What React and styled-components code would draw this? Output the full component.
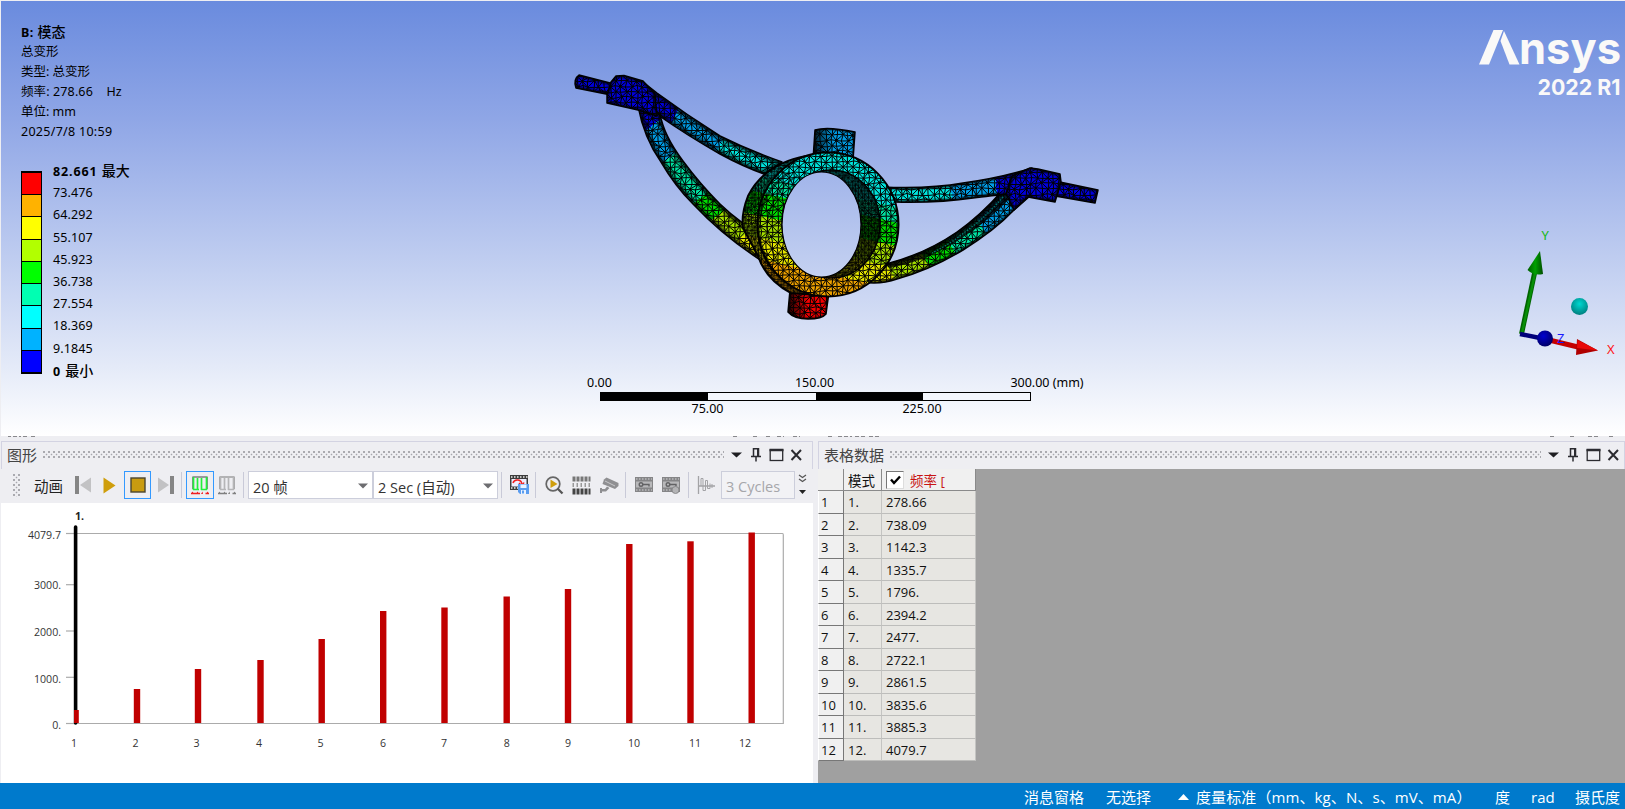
import React, { useId } from "react";
import styled, { createGlobalStyle } from "styled-components";

const UI = `"Open Sans", "Noto Sans", "Noto Sans CJK SC", sans-serif`;
const VIEW = `"Noto Sans", "Noto Sans CJK SC", sans-serif`;

const Global = createGlobalStyle`
  * { box-sizing: border-box; }
  body { margin: 0; background: #eeeef2; overflow: hidden; font-family: ${UI}; }
  svg { display: block; flex: none; }
`;

const Page = styled.div`
  width: 1625px;
  height: 809px;
  display: flex;
  flex-direction: column;
  overflow: hidden;
`;

/* ---------- graphics viewport ---------- */

const Viewport = styled.section`
  height: 435px;
  margin: 1px 0 0 1px;
  flex: none;
  display: grid;
  grid-template-columns: 559px 560px 1fr;
  background: linear-gradient(#6a8bde 0%, #8fa6e6 27%, #c3d0f1 62%, #e4eaf8 84%, #ffffff 100%);
  font-family: ${VIEW};
  color: #000;
`;

const Info = styled.div`
  padding: 21px 0 0 20px;
`;

const InfoLine = styled.div`
  height: 20px;
  line-height: 20px;
  font-size: 12.5px;
  font-weight: ${(p) => (p.$bold ? 700 : 400)};
  white-space: pre;
  letter-spacing: ${(p) => p.$track || 0}px;
  span { font-weight: 500; font-size: 14px; letter-spacing: 0; }
`;

const Legend = styled.div`
  display: flex;
  gap: 11px;
  margin-top: 18px;
`;

const Swatches = styled.div`
  width: 21px;
  height: 203px;
  margin-top: 11px;
  display: flex;
  flex-direction: column;
  border: 1px solid #000;
  border-width: 2px 1px;
`;

const Swatch = styled.div`
  flex: 1;
  background: ${(p) => p.$color};
  & + & { border-top: 1px solid #000; }
`;

const LegendLabel = styled.div`
  height: 22.2px;
  line-height: 22px;
  font-size: 12.5px;
  letter-spacing: ${(p) => (p.$bold ? 0.9 : 0.1)}px;
  font-weight: ${(p) => (p.$bold ? 700 : 400)};
  span { font-weight: 500; font-size: 14px; letter-spacing: 0; }
`;

const ModelColumn = styled.div`
  display: flex;
  flex-direction: column;
  padding-top: 59px;
`;

const RulerBox = styled.div`
  margin-top: 45px;
  width: 540px;
  font-size: 12.5px;
  line-height: 15px;
`;

const RulerLabels = styled.div`
  display: grid;
  grid-template-columns: ${(p) => p.$cols};
  height: 17px;
  white-space: pre;
  text-align: center;
`;

const RulerBar = styled.div`
  width: 431px;
  height: 9px;
  margin-left: 40px;
  border: 1px solid #000;
  display: grid;
  grid-template-columns: repeat(4, 1fr);
`;

const RulerPart = styled.div`
  background: ${(p) => (p.$dark ? "#000" : "#f4f7fd")};
`;

const RightColumn = styled.div`
  display: flex;
  flex-direction: column;
  align-items: flex-end;
  justify-content: space-between;
  padding: 0 0 71px;
`;

/* ---------- docked panels ---------- */

const Strip = styled.div`
  height: 5px;
  flex: none;
  background: #eeeef2;
`;

const Panels = styled.div`
  height: 342px;
  flex: none;
  display: flex;
  gap: 5px;
  padding-left: 1px;
`;

const Panel = styled.section`
  width: ${(p) => (p.$w ? `${p.$w}px` : "auto")};
  flex: ${(p) => (p.$w ? "none" : 1)};
  display: flex;
  flex-direction: column;
  background: ${(p) => p.$bg};
`;

const PanelHeader = styled.header`
  height: 28px;
  flex: none;
  display: flex;
  align-items: center;
  padding: 0 ${(p) => p.$right}px 2px 5px;
  background: #eeeef2;
  border: 1px solid #d3d3e2;
  border-bottom: 0;
  font-size: 15px;
  color: #444;
`;

const Title = styled.span`
  line-height: 24px;
  margin-right: 6px;
  white-space: nowrap;
`;

const HeaderDots = styled.div`
  flex: 1;
  height: 7px;
  margin-right: 7px;
  background-image: radial-gradient(circle at 1px 1px, #a8a8ae 0.7px, transparent 1.1px),
    radial-gradient(circle at 3.5px 3.5px, #a8a8ae 0.7px, transparent 1.1px);
  background-size: 5px 5px;
`;

const Toolbar = styled.div`
  height: 34px;
  flex: none;
  display: flex;
  align-items: center;
  background: #eeeef2;
  padding: 0 0 2px 12px;
`;

const Grip = styled.div`
  width: 7px;
  height: 23px;
  margin-right: 14px;
  background-image: radial-gradient(circle at 1px 1px, #a8a8ae 0.7px, transparent 1.1px),
    radial-gradient(circle at 3.5px 3.5px, #a8a8ae 0.7px, transparent 1.1px);
  background-size: 5px 5px;
`;

const ToolLabel = styled.span`
  width: 40px;
  font-size: 14.5px;
  color: #222;
  white-space: nowrap;
`;

const ToolButton = styled.span`
  width: ${(p) => p.$w}px;
  height: 28px;
  flex: none;
  margin-left: ${(p) => p.$ml || 0}px;
  display: flex;
  align-items: center;
  justify-content: center;
  border: ${(p) => (p.$on ? "1.5px solid #3399ff" : "0")};
`;

const Sep = styled.i`
  width: 1px;
  height: 26px;
  flex: none;
  background: #c9cad8;
  margin: 0 ${(p) => p.$r}px 0 ${(p) => p.$l}px;
`;

const Combo = styled.span`
  width: ${(p) => p.$w}px;
  height: 28px;
  flex: none;
  display: flex;
  align-items: center;
  justify-content: space-between;
  padding: 2px ${(p) => p.$pr || 4}px 0 4px;
  background: ${(p) => (p.$off ? "#f2f2f5" : "#fff")};
  border: 1px solid #cccedb;
  color: ${(p) => (p.$off ? "#a6a6aa" : "#333")};
  font-size: 14.5px;
  letter-spacing: ${(p) => p.$track || 0}px;
  white-space: nowrap;
`;

const ChartArea = styled.div`
  flex: 1;
  background: #fff;
`;

/* ---------- table ---------- */

const Table = styled.div`
  width: 158px;
  display: grid;
  grid-template-columns: 26px 38px 94px;
  grid-template-rows: 22px repeat(12, 22.5px);
  font-size: 13px;
  color: #111;
`;

const HeadCell = styled.div`
  display: flex;
  align-items: center;
  padding-left: 4px;
  gap: 6px;
  font-size: 13.5px;
  background: #f0f0f0;
  border-right: 1px solid #8a8a8a;
  border-bottom: 1px solid #8a8a8a;
  color: ${(p) => (p.$red ? "#c81414" : "#111")};
  white-space: nowrap;
`;

const RowHead = styled.div`
  padding-left: 2px;
  line-height: 22px;
  background: #f0f0f0;
  border-right: 1px solid #777;
  border-bottom: 1px solid #777;
  border-left: 1px solid #fff;
`;

const Cell = styled.div`
  padding-left: 4px;
  line-height: 22px;
  background: #e7e6e2;
  border-right: 1px solid #c4c4c2;
  border-bottom: 1px solid #bdbdbb;
`;

const Check = styled.span`
  width: 18px;
  height: 18px;
  background: #fff;
  border: 1px solid #777;
  border-right-color: #ddd;
  border-bottom-color: #ddd;
  display: flex;
  align-items: center;
  justify-content: center;
`;

/* ---------- status bar ---------- */

const StatusBar = styled.footer`
  flex: 1;
  display: flex;
  align-items: center;
  justify-content: flex-end;
  padding: 1px 5px 0 0;
  background: #007acc;
  color: #fff;
  font-size: 15px;
  white-space: nowrap;
`;

const StatusItem = styled.span`
  display: flex;
  align-items: center;
  gap: 7px;
  width: ${(p) => p.$w}px;
  letter-spacing: ${(p) => p.$track || 0}px;
`;

/* ---------- data ---------- */

const legend = [
  ["#ff0000", "73.476"], ["#ffb200", "64.292"], ["#ffff00", "55.107"],
  ["#b2ff00", "45.923"], ["#00ff00", "36.738"], ["#00ffb2", "27.554"],
  ["#00ffff", "18.369"], ["#00b2ff", "9.1845"], ["#0000ff", null],
];

const modes = ["278.66", "738.09", "1142.3", "1335.7", "1796.", "2394.2",
  "2477.", "2722.1", "2861.5", "3835.6", "3885.3", "4079.7"];

/* ---------- finite element model ---------- */

const CELLS = 10;
const STEP = 5.4;
const TILE = CELLS * STEP;

function buildMesh() {
  let s = 7;
  const rnd = () => {
    s = (s * 16807) % 2147483647;
    return s / 2147483647;
  };
  const pts = [];
  for (let j = 0; j < CELLS; j++) {
    pts.push([]);
    for (let i = 0; i < CELLS; i++) pts[j].push([(rnd() - 0.5) * 2.4, (rnd() - 0.5) * 2.4]);
  }
  const at = (i, j) => {
    const o = pts[(j + CELLS) % CELLS][(i + CELLS) % CELLS];
    return `${(i * STEP + o[0]).toFixed(1)} ${(j * STEP + o[1]).toFixed(1)}`;
  };
  let d = "";
  for (let j = -1; j <= CELLS; j++)
    for (let i = -1; i <= CELLS; i++) {
      d += `M${at(i, j)}L${at(i + 1, j)}M${at(i, j)}L${at(i, j + 1)}`;
      d += (i + j + CELLS * 2) % 2 ? `M${at(i, j)}L${at(i + 1, j + 1)}` : `M${at(i + 1, j)}L${at(i, j + 1)}`;
    }
  return d;
}
const meshPath = buildMesh();

const C = { b: "#0000dc", lb: "#009ce4", c: "#00e4dc", t: "#00e0a0", g: "#00dc00", yg: "#a2dc00", y: "#e6e600", o: "#eca000" };

function Bands({ id, from, to, stops }) {
  const list = [];
  let prev = 0;
  stops.forEach(([color, end], k) => {
    list.push(<stop key={`${k}a`} offset={prev} stopColor={C[color]} />);
    list.push(<stop key={`${k}b`} offset={end} stopColor={C[color]} />);
    prev = end;
  });
  return (
    <linearGradient id={id} gradientUnits="userSpaceOnUse" x1={from[0]} y1={from[1]} x2={to[0]} y2={to[1]}>
      {list}
    </linearGradient>
  );
}

function Solid({ d, fill, shade = 5 }) {
  const id = useId().replace(/[^a-zA-Z0-9]/g, "");
  return (
    <g strokeLinejoin="round">
      <clipPath id={id}><path d={d} /></clipPath>
      <g clipPath={`url(#${id})`}>
        <path d={d} fill={fill} />
        <path d={d} fill="url(#mesh)" stroke="#000" strokeWidth={shade * 2} strokeOpacity=".35" />
        <path d={d} fill="none" stroke="#000" strokeWidth={shade} strokeOpacity=".5" />
      </g>
      <path d={d} fill="none" stroke="#000" strokeWidth="1.5" />
    </g>
  );
}

const upperLeft = "M643 82L657 93Q687 115 720 136Q748 150 782 162L764 174Q742 166 720 154Q688 136 658 115L638 106Z";
const lowerLeft = "M638 106Q644 138 661 162Q675 186 693 204Q724 237 762 261L772 240Q744 227 720 204Q700 184 683 161Q664 136 660 114Z";
const upperRight = "M882 187Q930 189 963 183Q1000 178 1032 168L1028 192Q990 196 973 198Q940 203 895 202Z";
const lowerRight = "M1003 190Q980 216 957 232Q925 254 886 264L862 282Q880 285 897 279Q930 270 963 250Q995 230 1013 211L1030 196Z";
const backRing = "M806 156Q764 164 748 196Q741 214 743 228L758 256Q766 280 791 293L830 296V156Z";
const topLug = "M815 130Q827 126 855 132L853 160H813Z";
const bottomLug = "M790 290L788 312Q794 319 808 319Q822 319 826 314L829 292Z";

function Model() {
  return (
    <svg width="560" height="270" viewBox="560 60 560 270">
      <defs>
        <pattern id="mesh" width={TILE} height={TILE} patternUnits="userSpaceOnUse">
          <path d={meshPath} stroke="#000" strokeWidth="1" fill="none" />
        </pattern>
        <pattern id="dense" width={TILE * 0.6} height={TILE * 0.6} patternUnits="userSpaceOnUse">
          <g transform="scale(.6)">
            <path d={meshPath} stroke="#000" strokeWidth="1.6" fill="none" />
          </g>
        </pattern>
        <Bands id="ring" from={[770, 160]} to={[739, 300]}
          stops={[["c", 0.13], ["t", 0.235], ["g", 0.395], ["yg", 0.545], ["y", 0.69], ["o", 1]]} />
        <Bands id="ul" from={[640, 95]} to={[780, 165]} stops={[["b", 0.26], ["lb", 0.6], ["c", 1]]} />
        <Bands id="ll" from={[645, 105]} to={[762, 252]}
          stops={[["b", 0.11], ["lb", 0.3], ["t", 0.57], ["g", 0.7], ["yg", 0.87], ["y", 1]]} />
        <Bands id="ur" from={[882, 190]} to={[1032, 180]} stops={[["c", 0.46], ["lb", 0.76], ["b", 1]]} />
        <Bands id="lr" from={[870, 280]} to={[1028, 190]}
          stops={[["y", 0.12], ["yg", 0.32], ["g", 0.48], ["t", 0.68], ["lb", 0.88], ["b", 1]]} />
        <linearGradient id="lugShade">
          <stop offset="0" stopColor="#000" stopOpacity=".85" />
          <stop offset=".5" stopColor="#000" stopOpacity="0" />
        </linearGradient>
        <mask id="bore" maskUnits="userSpaceOnUse" x="560" y="60" width="560" height="270">
          <rect x="560" y="60" width="560" height="270" fill="#fff" />
          <ellipse cx="821.5" cy="224.5" rx="39.5" ry="52.5" fill="#000" />
        </mask>
      </defs>

      <Solid d="M579 75L614 84L611 95L576 88Q573 79 579 75Z" fill={C.b} shade={3} />
      <Solid d={upperLeft} fill="url(#ul)" />
      <Solid d={lowerLeft} fill="url(#ll)" />
      <Solid d="M611 82L616 76L624 75.500L643 81L655 94L657 116L638 110L607 103V95Z" fill={C.b} shade={3} />

      <Solid d={lowerRight} fill="url(#lr)" shade={3} />
      <path d="M1003 190Q980 216 957 232Q925 254 886 264L890 268Q930 260 962 238Q990 220 1012 196Z" fill="#000" opacity=".8" />
      <path d="M1003 197Q985 218 965 232Q950 244 932 253" stroke="#007c74" strokeWidth="1.300" strokeDasharray="1.500 1.500" fill="none" />
      <Solid d={upperRight} fill="url(#ur)" shade={3} />
      <Solid d="M1055 181L1098 190L1095 203L1055 196Z" fill={C.b} shade={3} />
      <Solid d="M1012 176L1030 168L1038 169L1060 174L1061 182L1055 202L1028 197L1014 210L1006 194Z" fill={C.b} shade={3} />

      <Solid d={topLug} fill={C.lb} shade={2} />
      <path d={topLug} fill="url(#lugShade)" />
      <Solid d={bottomLug} fill="#f40000" shade={2} />
      <path d={bottomLug} fill="url(#lugShade)" />

      <g mask="url(#bore)">
        <path d={backRing} fill="url(#ring)" />
        <path d={backRing} fill="url(#dense)" stroke="#000" strokeWidth="2" />
        <path d={backRing} fill="#000" opacity=".2" />
        <ellipse cx="828" cy="224.500" rx="70.500" ry="72" fill="url(#ring)" />
        <ellipse cx="828" cy="224.500" rx="70.500" ry="72" fill="url(#mesh)" stroke="#000" strokeWidth="2" />
        <path d="M790 172Q762 190 758 224Q758 248 774 272" stroke="#000" strokeWidth="3" strokeOpacity=".6" fill="none" />
        <path d="M797 176Q771 192 767 224Q767 244 778 262" stroke="#000" strokeWidth="1.500" strokeOpacity=".6" fill="none" />
        <ellipse cx="831" cy="224" rx="49" ry="54" fill="url(#ring)" />
        <ellipse cx="831" cy="224" rx="49" ry="54" fill="#000" fillOpacity=".5" stroke="#000" strokeWidth="1.500" />
        <ellipse cx="831" cy="224" rx="49" ry="54" fill="url(#dense)" />
      </g>
      <ellipse cx="821.5" cy="224.5" rx="39.5" ry="52.500" fill="none" stroke="#000" strokeWidth="1.200" />
    </svg>
  );
}

function Logo() {
  return (
    <svg width="148" height="104" viewBox="1477 1 148 104" fill="#faf9f8">
      <path d="M1479 64.500L1493.500 30H1503L1489 64.500Z" />
      <path d="M1504 31L1519.500 64.500H1509.500L1500.500 41Z" />
      <text x="1519" y="64" fontFamily="Inter, sans-serif" fontWeight="700" fontSize="44" textLength="102" lengthAdjust="spacingAndGlyphs">nsys</text>
      <text x="1537.500" y="95" fontFamily="Inter, sans-serif" fontWeight="700" fontSize="22" textLength="83" lengthAdjust="spacingAndGlyphs">2022 R1</text>
    </svg>
  );
}

function Triad() {
  return (
    <svg width="113" height="145" viewBox="1512 220 113 145" fontFamily="Noto Sans, sans-serif" fontSize="13">
      <defs>
        <radialGradient id="ball" cx=".5" cy=".35" r=".65">
          <stop offset="0" stopColor="#00d8d0" />
          <stop offset="1" stopColor="#007e7e" />
        </radialGradient>
        <radialGradient id="navy" cx=".4" cy=".35" r=".7">
          <stop offset="0" stopColor="#0000d0" />
          <stop offset="1" stopColor="#000060" />
        </radialGradient>
        <linearGradient id="cone"><stop offset="0" stopColor="#005c00" /><stop offset=".5" stopColor="#00a000" /><stop offset="1" stopColor="#004c00" /></linearGradient>
      </defs>
      <path d="M1521.500 334L1535 271" stroke="#006400" strokeWidth="5" />
      <path d="M1522 333L1535.500 271" stroke="#078f07" strokeWidth="2.400" />
      <path d="M1540 251L1527.500 270Q1534 276 1543 274Z" fill="url(#cone)" />
      <path d="M1549 340L1578 347" stroke="#c40000" strokeWidth="5" />
      <path d="M1577 339L1598 350.500L1576 355Z" fill="#b00000" />
      <path d="M1577.500 340L1598 350.500L1577 348Z" fill="#e80808" />
      <path d="M1520 334L1545 339" stroke="#00007a" strokeWidth="4.500" />
      <circle cx="1545" cy="338.500" r="8" fill="url(#navy)" />
      <circle cx="1579.500" cy="306.500" r="8.500" fill="url(#ball)" />
      <text x="1541.500" y="240" fill="#16b816">Y</text>
      <text x="1557" y="343" fill="#1a1aff">Z</text>
      <text x="1607" y="354" fill="#ff1414">X</text>
    </svg>
  );
}

/* ---------- icons ---------- */

const Step = ({ flip }) => (
  <svg width="18" height="18" viewBox="0 0 18 18">
    <g transform={flip ? "matrix(-1 0 0 1 18 0)" : undefined}>
      <path d="M1 0H5V18H1Z" fill="#858585" />
      <path d="M17 1.500V16.500L6 9Z" fill="#c2c2c4" />
    </g>
  </svg>
);
const Play = () => (
  <svg width="13" height="17" viewBox="0 0 13 17"><path d="M.5 .5L12.500 8.500L.5 16.500Z" fill="#cf9e0c" /></svg>
);
const Stop = () => (
  <svg width="16" height="16" viewBox="0 0 16 16"><rect x="1" y="1" width="14" height="14" fill="#c99b10" stroke="#4a4530" strokeWidth="1.400" /></svg>
);
const Columns = ({ a, b, c }) => (
  <svg width="18" height="19" viewBox="0 0 18 19" fill="none">
    <path d="M2 13V1H16V13" stroke={b} strokeWidth="1.200" />
    <path d="M2.500 1V14M6.500 2V14M10.500 2V14M15.500 1V14M2 13.500H8M10 13.500H16" stroke={a} strokeWidth="1.700" />
    <path d="M0 18L1.500 15.500L3 18ZM5 18L6.500 15.500L8 18ZM10 18L11.500 15.500L12 18ZM15 18L16.500 15.500L18 18Z" fill={c} />
    <path d="M0 17.500H9M14.500 17.500H18" stroke={c} strokeWidth="1.300" />
  </svg>
);
const Film = ({ x = 0, y = 0, w = 18, h = 15, color }) => (
  <g>
    <rect x={x} y={y} width={w} height={h} fill={color} />
    <path d={`M${x + 1} ${y + 2}H${x + w}M${x + 1} ${y + h - 2}H${x + w}`} stroke="#eee" strokeWidth="1.500" strokeDasharray="1.500 1.500" />
  </g>
);
const SaveFilm = () => (
  <svg width="19" height="20" viewBox="0 0 19 20" fill="none">
    <Film color="#3c3c3c" w={18} h={15} />
    <rect x="1.500" y="4" width="15" height="7.500" fill="#eef" />
    <path d="M3 8Q4 4.500 8 5Q12 5.500 12 10M9 8L12 11L14 7.500" stroke="#f02020" strokeWidth="1.500" />
    <path d="M8 9H19V19H10L8 17Z" fill="#5b9df0" />
    <path d="M10.500 9.500H16.500V13H10.500ZM11 15H16V19H11Z" fill="#eaf3ff" />
    <path d="M12 15.500H14V18.500H12Z" fill="#5b9df0" />
  </svg>
);
const Magnify = () => (
  <svg width="19" height="19" viewBox="0 0 19 19" fill="none">
    <circle cx="8" cy="8" r="6.800" stroke="#666" strokeWidth="1.700" />
    <path d="M12.500 12.500L17.500 17.500" stroke="#555" strokeWidth="2.300" />
    <path d="M5.500 3.500L12.500 8L5.500 12Z" fill="#cf9e0c" />
  </svg>
);
const Strips = () => (
  <svg width="19" height="19" viewBox="0 0 19 19" fill="none">
    <path d="M.5 3H18.500" stroke="#777" strokeWidth="5" strokeDasharray="3 1" />
    <path d="M.5 9H18.500" stroke="#999" strokeWidth="4" strokeDasharray="1.500 2.500" />
    <path d="M.5 15.500H18.500" stroke="#444" strokeWidth="6" strokeDasharray="3 1" />
  </svg>
);
const Camera = () => (
  <svg width="19" height="17" viewBox="0 0 19 17" fill="#8f8f92">
    <path d="M4 2.500L6.500 .500L18.500 6V9L15 12L2.500 7Z" />
    <path d="M5 4L15 9" stroke="#c8c8ca" />
    <path d="M0 11V16H2V14.500H6L9.500 11L7 9.500L5 12H2V11Z" />
  </svg>
);
const KeyFilm = ({ extra }) => (
  <svg width="18" height="18" viewBox="0 0 18 18" fill="none">
    <rect x="0" y="1" width="18" height="15" fill="#858587" />
    <path d="M1 3H17M1 14H17" stroke="#d4d4d6" strokeWidth="1" strokeDasharray="1.500 1.500" />
    <rect x="1" y="5.500" width="16" height="6" fill="#b8b8ba" />
    <circle cx="6" cy="8.500" r="1.800" stroke="#626264" strokeWidth="1.400" />
    <path d="M8 8.500H14V10.500" stroke="#626264" strokeWidth="1.400" />
    {extra && <circle cx="13.500" cy="14" r="3.500" fill="#b4b4b6" stroke="#8a8a8c" />}
  </svg>
);
const Decay = () => (
  <svg width="18" height="18" viewBox="0 0 18 18" fill="none" stroke="#a3a3a6">
    <path d="M1.500 0V18M1 10H18" strokeWidth="1.300" />
    <path d="M4 10V2.500H6V14.500H8.500V4.500H10.500V12.500H13V7.500M15 8V12" />
  </svg>
);
const Caret = ({ color = "#6d6d70" }) => (
  <svg width="10" height="6" viewBox="0 0 10 6"><path d="M0 .5H10L5 5.500Z" fill={color} /></svg>
);
const Overflow = () => (
  <svg width="9" height="22" viewBox="0 0 9 22" fill="none">
    <path d="M1 1L4.500 3.500L8 1M1 5L4.500 7.500L8 5" stroke="#555" strokeWidth="1.300" />
    <path d="M1 16H8L4.500 20Z" fill="#222" />
  </svg>
);
const WindowButtons = () => (
  <svg width="72" height="16" viewBox="0 0 72 16" fill="none" stroke="#2b2b30">
    <path d="M0 5.500H11L5.500 10.500Z" fill="#1e1e22" stroke="none" />
    <path d="M22 1.700H27.500V9M22.500 1V9M20 9.500H30M25 9.500V14.500" strokeWidth="1.500" />
    <path d="M27 2V9" strokeWidth="2" />
    <rect x="39.200" y="3" width="12.500" height="10.500" strokeWidth="1.300" />
    <path d="M38.500 3H52.500" strokeWidth="2.500" />
    <path d="M60.500 3L70 13M70 3L60.500 13" strokeWidth="2" />
  </svg>
);

/* ---------- chart ---------- */

const bars = [
  [74, 710], [137, 689], [198, 669], [260.500, 660], [321.700, 639], [383.200, 611],
  [444.500, 607.500], [506.700, 596.500], [568, 589], [629.300, 544], [690.500, 541.300], [751.700, 532.500],
];
const barLabels = [74, 135.500, 196.500, 259, 320.500, 383, 444, 506.700, 568, 634, 695, 745];
const ticks = [["4079.7", 533.5], ["3000.", 584.7], ["2000.", 631], ["1000.", 677.3], ["0.", 723.5]];

function Chart() {
  return (
    <svg width="812" height="280" viewBox="1 503 812 280" fontFamily="Open Sans, Noto Sans, sans-serif" fontSize="10.600" fill="#333">
      <path d="M66 533.500H782.500Q783.300 533.500 783.300 535V723.500H66" fill="none" stroke="#ababab" strokeWidth="1.200" />
      {ticks.map(([t, y], i) => (
        <g key={t}>
          <path d={`M66 ${y}H75`} stroke="#ababab" strokeWidth="1.200" />
          <text x="61" y={y + (i === 0 || i > 2 ? 5.500 : 4.500)} textAnchor="end">{t}</text>
        </g>
      ))}
      <path d="M75.600 527V723" stroke="#000" strokeWidth="3.600" strokeLinecap="round" />
      {bars.map(([x, y], i) => (
        <rect key={x} x={i ? x - 3.200 : x} y={y} width={i ? 6.400 : 4.800} height={723 - y} fill="#c00000" />
      ))}
      {barLabels.map((x, i) => (
        <text key={x} x={x} y="746.500" textAnchor="middle">{i + 1}</text>
      ))}
      <text x="75" y="520" fontWeight="700" fill="#222">1.</text>
    </svg>
  );
}

export default function App() {
  return (
    <Page>
      <Global />
      <Viewport>
        <Info>
          <InfoLine $bold $track={0.5}>B: <span>模态</span></InfoLine>
          <InfoLine>总变形</InfoLine>
          <InfoLine>类型: 总变形</InfoLine>
          <InfoLine $track={0.12}>频率: 278.66{"   "} Hz</InfoLine>
          <InfoLine>单位: mm</InfoLine>
          <InfoLine $track={0.28}>2025/7/8 10:59</InfoLine>
          <Legend>
            <Swatches>
              {legend.map(([color]) => <Swatch key={color} $color={color} />)}
            </Swatches>
            <div>
              <LegendLabel $bold>82.661 <span>最大</span></LegendLabel>
              {legend.map(([color, label]) => label && <LegendLabel key={color}>{label}</LegendLabel>)}
              <LegendLabel $bold>0 <span>最小</span></LegendLabel>
            </div>
          </Legend>
        </Info>
        <ModelColumn>
          <Model />
          <RulerBox>
            <RulerLabels $cols="79px 351px 114px">
              <span>0.00</span><span>150.00</span><span>300.00 (mm)</span>
            </RulerLabels>
            <RulerBar>
              <RulerPart $dark /><RulerPart /><RulerPart $dark /><RulerPart />
            </RulerBar>
            <RulerLabels $cols="295px 134px">
              <span>75.00</span><span>225.00</span>
            </RulerLabels>
          </RulerBox>
        </ModelColumn>
        <RightColumn>
          <Logo />
          <Triad />
        </RightColumn>
      </Viewport>

      <Strip>
        <svg width="1625" height="5" viewBox="0 0 1625 5">
          <path d="M8 .5H11M13 .5H21M23 .5H29M31 .5H37M733 .5H739M753 .5H758M766 .5H772M777 .5H784M793 .5H800M828 .5H834M838 .5H852M855 .5H866M869 .5H880M1550 .5H1555M1570 .5H1576M1588 .5H1600M1609 .5H1615" stroke="#88888c" strokeDasharray="4 2" />
        </svg>
      </Strip>

      <Panels>
        <Panel $w={812} $bg="#fff">
          <PanelHeader $right={9}>
            <Title>图形</Title>
            <HeaderDots />
            <WindowButtons />
          </PanelHeader>
          <Toolbar>
            <Grip />
            <ToolLabel>动画</ToolLabel>
            <ToolButton $w={18}><Step /></ToolButton>
            <ToolButton $w={13} $ml={11}><Play /></ToolButton>
            <ToolButton $w={27} $ml={8} $on><Stop /></ToolButton>
            <ToolButton $w={18} $ml={6}><Step flip /></ToolButton>
            <Sep $l={6} $r={4} />
            <ToolButton $w={28} $on><Columns a="#22f03c" b="#444" c="#f02020" /></ToolButton>
            <ToolButton $w={18} $ml={4}><Columns a="#b5b5b7" b="#777" c="#808080" /></ToolButton>
            <Sep $l={7} $r={4} />
            <Combo $w={125}>20 帧<Caret /></Combo>
            <Combo $w={125}>2 Sec (自动)<Caret /></Combo>
            <Sep $l={3} $r={8} />
            <ToolButton $w={19}><SaveFilm /></ToolButton>
            <Sep $l={6} $r={9} />
            <ToolButton $w={19}><Magnify /></ToolButton>
            <ToolButton $w={19} $ml={8}><Strips /></ToolButton>
            <ToolButton $w={19} $ml={9}><Camera /></ToolButton>
            <Sep $l={6} $r={9} />
            <ToolButton $w={18}><KeyFilm /></ToolButton>
            <ToolButton $w={18} $ml={9}><KeyFilm extra /></ToolButton>
            <Sep $l={8} $r={8} />
            <ToolButton $w={18}><Decay /></ToolButton>
            <ToolButton $w={6} />
            <Combo $w={74} $off $pr={0}>3 Cycles</Combo>
            <ToolButton $w={9} $ml={3}><Overflow /></ToolButton>
          </Toolbar>
          <ChartArea><Chart /></ChartArea>
        </Panel>

        <Panel $bg="#a0a0a0">
          <PanelHeader $right={4}>
            <Title>表格数据</Title>
            <HeaderDots />
            <WindowButtons />
          </PanelHeader>
          <Table>
            <HeadCell />
            <HeadCell>模式</HeadCell>
            <HeadCell $red>
              <Check>
                <svg width="11" height="10" viewBox="0 0 11 10"><path d="M1 4.500L4 8L10 1.500" fill="none" stroke="#000" strokeWidth="2.400" /></svg>
              </Check>
              频率 [
            </HeadCell>
            {modes.map((f, i) => (
              <React.Fragment key={f}>
                <RowHead>{i + 1}</RowHead>
                <Cell>{i + 1}.</Cell>
                <Cell>{f}</Cell>
              </React.Fragment>
            ))}
          </Table>
        </Panel>
      </Panels>

      <StatusBar>
        <StatusItem $w={82}>消息窗格</StatusItem>
        <StatusItem $w={72}>无选择</StatusItem>
        <StatusItem $w={317} $track={0.1}>
          <svg width="11" height="6" viewBox="0 0 11 6"><path d="M0 6L5.500 0L11 6Z" fill="#fff" /></svg>
          度量标准（mm、kg、N、s、mV、mA）
        </StatusItem>
        <StatusItem $w={36}>度</StatusItem>
        <StatusItem $w={44}>rad</StatusItem>
        <StatusItem $w={45}>摄氏度</StatusItem>
      </StatusBar>
    </Page>
  );
}
